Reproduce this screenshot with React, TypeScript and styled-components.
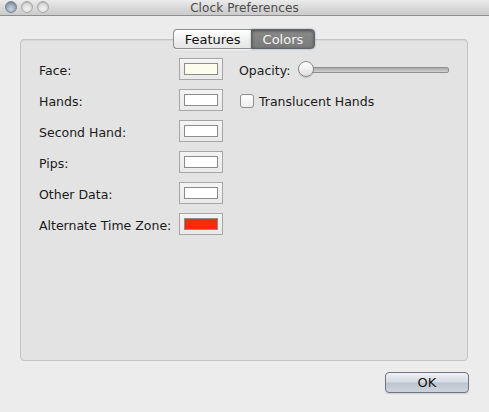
import React from "react";
import styled, { createGlobalStyle } from "styled-components";

const Global = createGlobalStyle`
  html, body { margin: 0; padding: 0; }
  body {
    width: 489px;
    height: 412px;
    overflow: hidden;
    background: #ececec;
    font-family: "Lucida Grande", "DejaVu Sans", sans-serif;
    color: #1a1a1a;
  }
`;

const Window = styled.div`
  width: 489px;
  height: 412px;
  display: flex;
  flex-direction: column;
  background: #ececec;
`;

const TitleBar = styled.div`
  height: 15px;
  flex: none;
  position: relative;
  display: flex;
  align-items: center;
  justify-content: center;
  background: linear-gradient(#ebebeb, #d6d6d6 60%, #cbcbcb);
  border-bottom: 1px solid #8e8e8e;
`;

const Lights = styled.div`
  position: absolute;
  left: 5px;
  top: 1px;
  display: flex;
  gap: 4px;
`;

const Light = styled.div<{ $active?: boolean }>`
  width: 12px;
  height: 12px;
  border-radius: 50%;
  box-sizing: border-box;
  border: 1px solid ${(p) => (p.$active ? "#7b8795" : "#a9a9a9")};
  background: ${(p) =>
    p.$active
      ? "radial-gradient(circle at 50% 70%, #c6d2de 0%, #98a7b7 55%, #75859a 100%)"
      : "radial-gradient(circle at 50% 70%, #f3f3f3 0%, #dcdcdc 55%, #c4c4c4 100%)"};
  box-shadow: inset 0 1px 1px rgba(0, 0, 0, 0.15);
`;

const Title = styled.div`
  font-size: 12px;
  color: #4a4a4a;
  letter-spacing: 0.1px;
  margin-top: 1px;
`;

const Body = styled.div`
  flex: 1;
  display: flex;
  flex-direction: column;
  padding: 13px 21px 0 20px;
`;

const TabBar = styled.div`
  display: flex;
  justify-content: center;
  position: relative;
  z-index: 1;
  height: 20px;
`;

const Tab = styled.div<{ $selected?: boolean; $first?: boolean }>`
  box-sizing: border-box;
  height: 20px;
  display: flex;
  align-items: center;
  justify-content: center;
  font-size: 13px;
  padding: 0 ${(p) => (p.$first ? "10px 0 11px" : "11px")};
  border: 1px solid ${(p) => (p.$selected ? "#5f6468" : "#8d8d8d")};
  border-radius: ${(p) => (p.$first ? "4px 0 0 4px" : "0 4px 4px 0")};
  ${(p) => (p.$first ? "border-right: none;" : "")}
  color: ${(p) => (p.$selected ? "#f4f4f4" : "#111")};
  background: ${(p) =>
    p.$selected
      ? "linear-gradient(#8a8a8a, #7a7a7a)"
      : "linear-gradient(#ffffff, #f1f1f1 50%, #e4e4e4)"};
  box-shadow: ${(p) =>
    p.$selected
      ? "inset 0 1px 3px rgba(0,0,0,0.45), 0 0 2px rgba(80,100,130,0.6)"
      : "0 1px 0 rgba(255,255,255,0.6)"};
`;

const Panel = styled.div`
  margin-top: -10px;
  height: 322px;
  box-sizing: border-box;
  border: 1px solid #c4c4c4;
  border-radius: 4px;
  background: #e3e3e3;
  box-shadow: inset 0 1px 1px rgba(0, 0, 0, 0.05);
  display: flex;
  padding: 18px 0 0 18px;
  gap: 16px;
`;

const LeftCol = styled.div`
  display: grid;
  grid-template-columns: 140px 44px;
  grid-auto-rows: 22px;
  row-gap: 9px;
  align-items: center;
`;

const Label = styled.div`
  font-size: 12.5px;
  color: #1a1a1a;
  padding-top: 2px;
`;

const Well = styled.div`
  box-sizing: border-box;
  width: 44px;
  height: 22px;
  border: 1px solid #a6a6a6;
  background: linear-gradient(#f4f4f4, #e9e9e9);
  padding: 4px;
  display: flex;
`;

const Swatch = styled.div<{ $color: string }>`
  flex: 1;
  border: 1px solid #8c8c8c;
  background: ${(p) => p.$color};
`;

const RightCol = styled.div`
  display: flex;
  flex-direction: column;
  gap: 9px;
`;

const Row = styled.div`
  height: 22px;
  display: flex;
  align-items: center;
`;

const RowLabel = styled.span`
  font-size: 12.5px;
  padding-top: 2px;
`;

const Slider = styled.div`
  position: relative;
  margin-left: 8px;
  width: 151px;
  height: 22px;
  display: flex;
  align-items: center;
`;

const Track = styled.div`
  flex: 1;
  margin-left: 2px;
  height: 4px;
  margin-top: 2px;
  border-radius: 2px;
  border: 1px solid #8f8f8f;
  background: linear-gradient(#a9a9a9, #d2d2d2);
`;

const Knob = styled.div`
  position: absolute;
  left: 0;
  top: 3px;
  width: 16px;
  height: 16px;
  box-sizing: border-box;
  border-radius: 50%;
  border: 1px solid #8a8a8a;
  background: linear-gradient(#ffffff, #f0f0f0 50%, #dcdcdc);
  box-shadow: 0 1px 1px rgba(0, 0, 0, 0.15);
`;

const Check = styled.div`
  width: 14px;
  height: 14px;
  box-sizing: border-box;
  margin: 2px 5px 0 1px;
  border: 1px solid #8e8e8e;
  border-radius: 3px;
  background: linear-gradient(#ffffff, #ededed);
`;

const Footer = styled.div`
  display: flex;
  justify-content: flex-end;
  padding-top: 11px;
`;

const Button = styled.button`
  width: 84px;
  height: 21px;
  margin-right: -1px;
  box-sizing: border-box;
  border: 1px solid #6f7681;
  border-radius: 4px;
  font-family: "Lucida Grande", "DejaVu Sans", sans-serif;
  font-size: 13px;
  color: #111;
  padding: 0;
  background: linear-gradient(#eef1f5, #d5dbe3 48%, #bcc4cf 52%, #ccd3dc);
  box-shadow: 0 1px 1px rgba(0, 0, 0, 0.12);
`;

const rows: { label: string; color: string }[] = [
  { label: "Face:", color: "#fdfdee" },
  { label: "Hands:", color: "#ffffff" },
  { label: "Second Hand:", color: "#ffffff" },
  { label: "Pips:", color: "#ffffff" },
  { label: "Other Data:", color: "#ffffff" },
  { label: "Alternate Time Zone:", color: "#f82a0c" },
];

export default function App() {
  return (
    <>
      <Global />
      <Window>
        <TitleBar>
          <Lights>
            <Light $active />
            <Light />
            <Light />
          </Lights>
          <Title>Clock Preferences</Title>
        </TitleBar>
        <Body>
          <TabBar>
            <Tab $first>Features</Tab>
            <Tab $selected>Colors</Tab>
          </TabBar>
          <Panel>
            <LeftCol>
              {rows.map((r) => (
                <React.Fragment key={r.label}>
                  <Label>{r.label}</Label>
                  <Well>
                    <Swatch $color={r.color} />
                  </Well>
                </React.Fragment>
              ))}
            </LeftCol>
            <RightCol>
              <Row>
                <RowLabel>Opacity:</RowLabel>
                <Slider>
                  <Track />
                  <Knob />
                </Slider>
              </Row>
              <Row>
                <Check />
                <RowLabel>Translucent Hands</RowLabel>
              </Row>
            </RightCol>
          </Panel>
          <Footer>
            <Button>OK</Button>
          </Footer>
        </Body>
      </Window>
    </>
  );
}
